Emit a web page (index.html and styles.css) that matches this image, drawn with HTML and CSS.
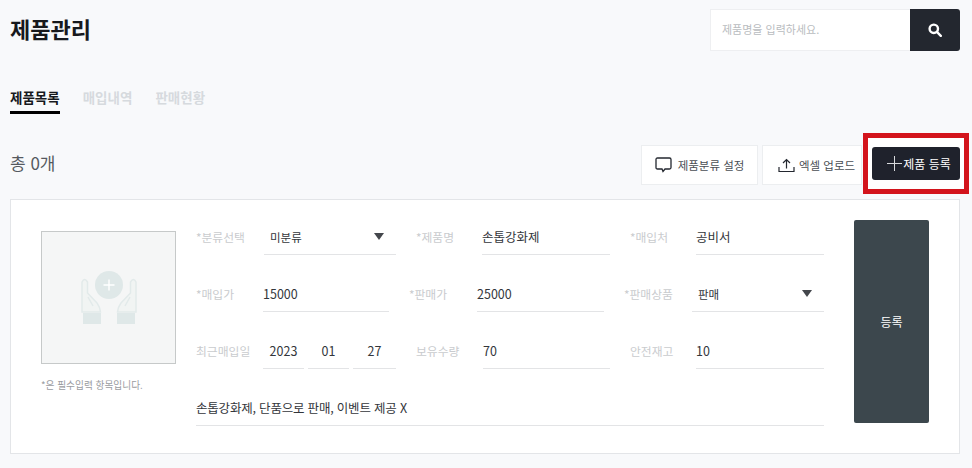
FILE: index.html
```html
<!DOCTYPE html>
<html lang="ko">
<head>
  <meta charset="UTF-8">
  <meta name="viewport" content="width=device-width, initial-scale=1">
  <title>제품관리</title>
  <link rel="stylesheet" href="styles.css">
</head>
<body>
  <div class="top">
    <h1>제품관리</h1>
    <div class="search">
      <div class="search-input">제품명을 입력하세요.</div>
      <button class="search-btn">
        <svg width="14" height="14" viewBox="0 0 14 14" fill="none" stroke="#fff" stroke-width="2.4">
          <circle cx="5.8" cy="5.8" r="4.2"/>
          <path d="M8.9 8.9 L12.8 12.8" stroke-linecap="round"/>
        </svg>
      </button>
    </div>
  </div>

  <div class="tabs">
    <a class="tab active">제품목록</a>
    <a class="tab">매입내역</a>
    <a class="tab">판매현황</a>
  </div>

  <div class="toolbar">
    <div class="total">총 0개</div>
    <div class="actions">
      <button class="btn btn-category">
        <svg width="17" height="16" viewBox="0 0 17 16" fill="none" stroke="#23272f" stroke-width="1.3">
          <path d="M2.5 1 H14.5 Q16 1 16 2.5 V10.5 Q16 12 14.5 12 H10 L8 14.5 L7 12 H2.5 Q1 12 1 10.5 V2.5 Q1 1 2.5 1 Z"/>
        </svg>
        제품분류 설정
      </button>
      <button class="btn btn-excel">
        <svg width="17" height="16" viewBox="0 0 17 16" fill="none" stroke="#23272f" stroke-width="1.2">
          <path d="M1 10 V14.5 H16 V10"/>
          <path d="M8.5 11.5 V3 M5 6 L8.5 2.5 L12 6"/>
        </svg>
        엑셀 업로드
      </button>
      <div class="highlight">
        <button class="btn-add">
          <svg width="15" height="15" viewBox="0 0 15 15" stroke="#d8dadd" stroke-width="1">
            <path d="M7.5 0 V15 M0 7.5 H15"/>
          </svg>
          제품 등록
        </button>
      </div>
    </div>
  </div>

  <div class="card">
    <div class="photo-col">
      <div class="photo">
        <svg width="58" height="56" viewBox="0 0 58 56">
          <circle cx="29" cy="15" r="14" fill="#dfe8e8"/>
          <path d="M29 9.5 V20.5 M23.5 15 H34.5" stroke="#fff" stroke-width="1.4"/>
          <g fill="#f1f4f3" stroke="#e2eaea" stroke-width="1.5">
            <path d="M2 42 V12 Q4.5 7 7.5 12 V23 L17 33 Q20 37 20.5 42 Z"/>
            <path d="M56 42 V12 Q53.5 7 50.5 12 V23 L41 33 Q38 37 37.5 42 Z"/>
            <path d="M8 27 L13 36 M50 27 L45 36" fill="none"/>
          </g>
          <rect x="3" y="43" width="18" height="11" fill="#dfe8e8"/>
          <rect x="37" y="43" width="18" height="11" fill="#dfe8e8"/>
        </svg>
      </div>
      <p class="note">*은 필수입력 항목입니다.</p>
    </div>

    <div class="form">
      <div class="row row-1">
        <div class="label">*분류선택</div>
        <div class="field select">미분류</div>
        <div class="label next">*제품명</div>
        <div class="field">손톱강화제</div>
        <div class="label next">*매입처</div>
        <div class="field">공비서</div>
      </div>
      <div class="row row-2">
        <div class="label">*매입가</div>
        <div class="field">15000</div>
        <div class="label next">*판매가</div>
        <div class="field">25000</div>
        <div class="label next">*판매상품</div>
        <div class="field select">판매</div>
      </div>
      <div class="row row-3">
        <div class="label">최근매입일</div>
        <div class="dates">
          <div class="field date">2023</div>
          <div class="field date">01</div>
          <div class="field date">27</div>
        </div>
        <div class="label next">보유수량</div>
        <div class="field">70</div>
        <div class="label next">안전재고</div>
        <div class="field">10</div>
      </div>
      <div class="field memo">손톱강화제, 단품으로 판매, 이벤트 제공 X</div>
    </div>

    <button class="submit">등록</button>
  </div>
</body>
</html>
```

FILE: styles.css
```css
* {
  margin: 0;
  padding: 0;
  box-sizing: border-box;
}

body {
  font-family: "Noto Sans CJK KR", "Noto Sans", sans-serif;
  background: #f8f9fb;
  color: #23272f;
  padding: 9px 12px 0 10px;
  overflow: hidden;
}

button {
  font-family: inherit;
  cursor: pointer;
}

.top {
  display: flex;
  justify-content: space-between;
  align-items: flex-start;
}

h1 {
  font-size: 22px;
  font-weight: 700;
  line-height: 42px;
  margin-top: -2px;
  color: #17191d;
}

.search {
  display: flex;
  width: 250px;
  height: 42px;
}

.search-input {
  flex: 1;
  background: #fff;
  border: 1px solid #eeeff1;
  border-right: none;
  padding-left: 11px;
  font-size: 11px;
  line-height: 39px;
  color: #b9bcc0;
}

.search-btn {
  width: 50px;
  border: none;
  border-radius: 0 3px 3px 0;
  background: #23272f;
  display: flex;
  align-items: center;
  justify-content: center;
}

.tabs {
  display: flex;
  gap: 23px;
  margin-top: 37px;
}

.tab {
  font-size: 13.5px;
  font-weight: 700;
  line-height: 18px;
  height: 26px;
  color: #d6dade;
}

.tab.active {
  color: #17191d;
  border-bottom: 3px solid #000;
}

.toolbar {
  display: flex;
  justify-content: space-between;
  align-items: center;
  height: 57px;
  margin-top: 21px;
}

.total {
  font-size: 17px;
  line-height: 22px;
  margin-top: -1px;
  color: #55595f;
}

.actions {
  display: flex;
  align-items: center;
  margin-right: -9px;
}

.btn {
  display: flex;
  align-items: center;
  justify-content: center;
  gap: 6px;
  height: 40px;
  margin-top: 3px;
  background: #fff;
  border: 1px solid #eceef0;
  font-size: 11.5px;
  color: #4a4e54;
}

.btn-category {
  width: 117px;
  margin-right: 4px;
}

.btn-excel {
  width: 100px;
  margin-right: 1px;
  gap: 4px;
  padding-left: 9px;
}

.highlight {
  border: 5px solid #d3141c;
  background: #fff;
  padding: 9px 4px;
}

.btn-add {
  display: flex;
  align-items: center;
  justify-content: center;
  gap: 1px;
  width: 88px;
  height: 33px;
  padding-left: 6px;
  border: none;
  border-radius: 3px;
  background: #1f222c;
  color: #fff;
  font-size: 12px;
}

.card {
  display: flex;
  width: 950px;
  margin-top: 7px;
  padding: 20px 30px 27px;
  background: #fff;
  border: 1px solid #e3e5e8;
}

.photo-col {
  width: 135px;
  margin: 11px 20px 0 0;
}

.photo {
  display: flex;
  align-items: center;
  justify-content: center;
  height: 133px;
  background: #f5f6f6;
  border: 1px solid #c6c9c9;
}

.note {
  margin-top: 13px;
  font-size: 9.7px;
  line-height: 16px;
  color: #9a9c9f;
}

.form {
  display: flex;
  flex-direction: column;
  gap: 22px;
  width: 628px;
}

.row {
  display: grid;
  height: 35px;
}

.row-1 {
  grid-template-columns: 68px 132px 86px 128px 86px 128px;
}

.row-2 {
  grid-template-columns: 67px 126px 88px 127px 88px 132px;
}

.row-3 {
  grid-template-columns: 67px 133px 87px 127px 86px 128px;
}

.label {
  font-size: 11.8px;
  line-height: 34px;
  color: #c9cbce;
  white-space: nowrap;
}

.label.next {
  padding-left: 20px;
}

.field {
  position: relative;
  height: 35px;
  border-bottom: 1px solid #e3e4e6;
  font-size: 12.5px;
  line-height: 34px;
  color: #33363b;
}

.select {
  padding-left: 6px;
  font-size: 11.5px;
}

/* 화살표 */
.select::after {
  content: "";
  position: absolute;
  right: 12px;
  top: 13px;
  border-top: 7px solid #44474c;
  border-left: 5px solid transparent;
  border-right: 5px solid transparent;
}

.dates {
  display: grid;
  grid-template-columns: 41px 41px 43px;
  column-gap: 4px;
}

.date {
  text-align: center;
}

.memo {
  width: 628px;
  letter-spacing: -0.2px;
}

.submit {
  width: 75px;
  height: 203px;
  margin-left: 30px;
  border: none;
  border-radius: 2px;
  background: #3c474d;
  color: #fff;
  font-size: 12px;
}
```
